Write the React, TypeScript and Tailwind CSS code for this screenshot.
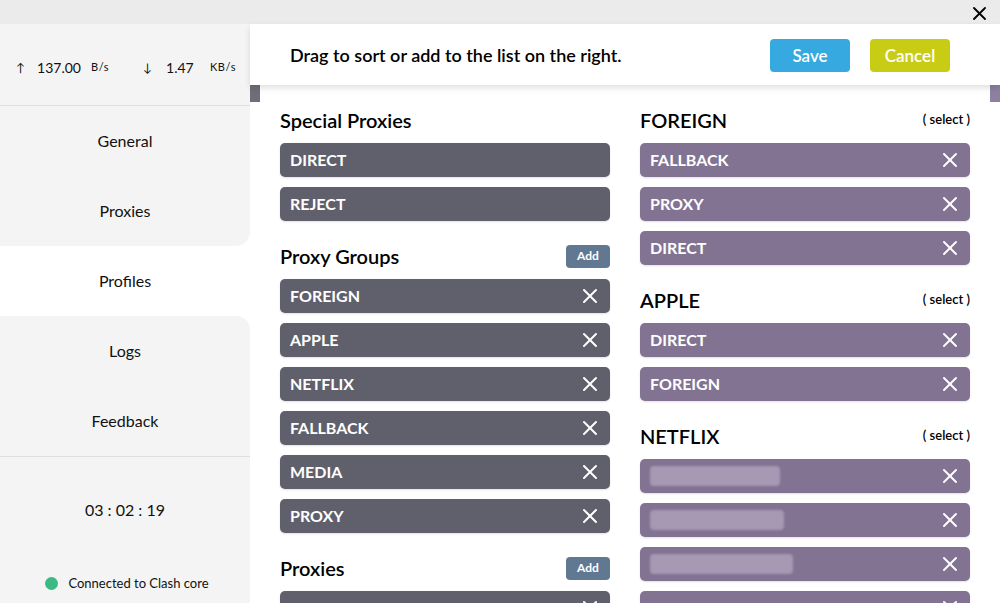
import { X } from 'lucide-react'

const font = { fontFamily: 'Lato, "Noto Sans", sans-serif' }

type Item = { name?: string; blur?: number; removable?: boolean }

function Chip({ item, purple }: { item: Item; purple?: boolean }) {
    return (
        <div
            className={`h-[34px] rounded-[5px] flex items-center justify-between pl-[10px] pr-[8px] text-white font-bold text-[16px] shadow-[0_1px_2px_rgba(0,0,0,0.12)] ${purple ? 'bg-[#837393]' : 'bg-[#5f606b]'}`}
        >
            {item.name ? (
                <span>{item.name}</span>
            ) : item.blur ? (
                <span className="h-[20px] bg-[#a798b4] blur-[1px] rounded-sm" style={{ width: item.blur }} />
            ) : (
                <span />
            )}
            {item.removable !== false && <X className="w-[24px] h-[24px]" strokeWidth={2} />}
        </div>
    )
}

function Section({ title, items, action, purple }: { title: string; items: Item[]; action?: 'add' | 'select'; purple?: boolean }) {
    return (
        <div className="mb-[23px]">
            <div className="h-[24px] mb-[11px] flex items-center justify-between">
                <h3 className="text-[20px] font-semibold text-black">{title}</h3>
                {action === 'add' && (
                    <button className="h-[23px] w-[44px] rounded-[4px] bg-[#617892] text-white text-[12px] font-bold">Add</button>
                )}
                {action === 'select' && <span className="text-[13px] font-semibold text-black">( select )</span>}
            </div>
            <div className="flex flex-col gap-[10px]">
                {items.map((it, i) => (
                    <Chip key={i} item={it} purple={purple} />
                ))}
            </div>
        </div>
    )
}

export default function App() {
    const menu = ['General', 'Proxies', 'Profiles', 'Logs', 'Feedback']
    const active = 2

    return (
        <div className="w-[1000px] h-[603px] overflow-hidden flex flex-col bg-white text-[#111]" style={font}>
            {/* title bar */}
            <div className="h-[24px] bg-[#ebebeb] flex items-center justify-end pr-[14px] shrink-0">
                <svg width="13" height="13" viewBox="0 0 13 13" className="mt-[3px]">
                    <path d="M1 1 L12 12 M12 1 L1 12" stroke="#000" strokeWidth="1.8" strokeLinecap="round" />
                </svg>
            </div>

            <div className="flex flex-1 min-h-0">
                {/* sidebar */}
                <aside className="w-[250px] shrink-0 bg-white flex flex-col">
                    <div className="h-[82px] bg-[#f4f4f4] border-b border-[#dedede] flex items-center pl-[16px] pt-[6px] text-[14px]">
                        <span className="text-[12px] mr-[12px]">↑</span>
                        <span className="w-[53px]">137.00</span>
                        <span className="text-[11px] tracking-wider ml-[1px] w-[52px]">B/s</span>
                        <span className="text-[12px] mr-[14px]">↓</span>
                        <span className="w-[44px]">1.47</span>
                        <span className="text-[11px] tracking-wider">KB/s</span>
                    </div>
                    {menu.map((m, i) => (
                        <div
                            key={m}
                            className={`h-[70px] flex items-center justify-center text-[16px] ${i === active ? 'bg-white' : 'bg-[#f4f4f4]'} ${i === active - 1 ? 'rounded-br-[14px]' : ''} ${i === active + 1 ? 'rounded-tr-[14px]' : ''}`}
                        >
                            {m}
                        </div>
                    ))}
                    <div className="flex-1 bg-[#f4f4f4] border-t border-[#dedede] flex flex-col items-center">
                        <div className="mt-[41px] text-[16px]">03 : 02 : 19</div>
                        <div className="mt-auto mb-[10px] flex items-center gap-[10px] text-[13px] ml-[4px]">
                            <span className="w-[13px] h-[13px] rounded-full bg-[#3dba84]" />
                            Connected to Clash core
                        </div>
                    </div>
                </aside>

                {/* main */}
                <main className="flex-1 flex flex-col min-w-0 relative">
                    <div className="h-[61px] shrink-0 bg-white flex items-center pl-[40px] pr-[50px] pt-[2px] shadow-[0_3px_6px_rgba(0,0,0,0.12)] relative z-10">
                        <p className="text-[18px] font-semibold text-black flex-1">Drag to sort or add to the list on the right.</p>
                        <button className="w-[80px] h-[33px] rounded-[4px] bg-[#36a9e1] text-white text-[17px] font-semibold mr-[20px]">Save</button>
                        <button className="w-[80px] h-[33px] rounded-[4px] bg-[#c9cc15] text-white text-[17px] font-semibold">Cancel</button>
                    </div>
                    <div className="absolute left-0 top-[61px] w-[10px] h-[17px] bg-[#6e6e78]" />
                    <div className="absolute right-0 top-[61px] w-[10px] h-[17px] bg-[#8e80a0]" />

                    <div className="flex-1 overflow-hidden px-[30px] pt-[23px] grid grid-cols-2 gap-[30px] items-start">
                        <div>
                            <Section
                                title="Special Proxies"
                                items={[{ name: 'DIRECT', removable: false }, { name: 'REJECT', removable: false }]}
                            />
                            <Section
                                title="Proxy Groups"
                                action="add"
                                items={['FOREIGN', 'APPLE', 'NETFLIX', 'FALLBACK', 'MEDIA', 'PROXY'].map(n => ({ name: n }))}
                            />
                            <Section title="Proxies" action="add" items={[{}]} />
                        </div>
                        <div>
                            <Section
                                title="FOREIGN"
                                action="select"
                                purple
                                items={[{ name: 'FALLBACK' }, { name: 'PROXY' }, { name: 'DIRECT' }]}
                            />
                            <Section title="APPLE" action="select" purple items={[{ name: 'DIRECT' }, { name: 'FOREIGN' }]} />
                            <Section
                                title="NETFLIX"
                                action="select"
                                purple
                                items={[{ blur: 130 }, { blur: 134 }, { blur: 143 }, {}]}
                            />
                        </div>
                    </div>
                </main>
            </div>
        </div>
    )
}
